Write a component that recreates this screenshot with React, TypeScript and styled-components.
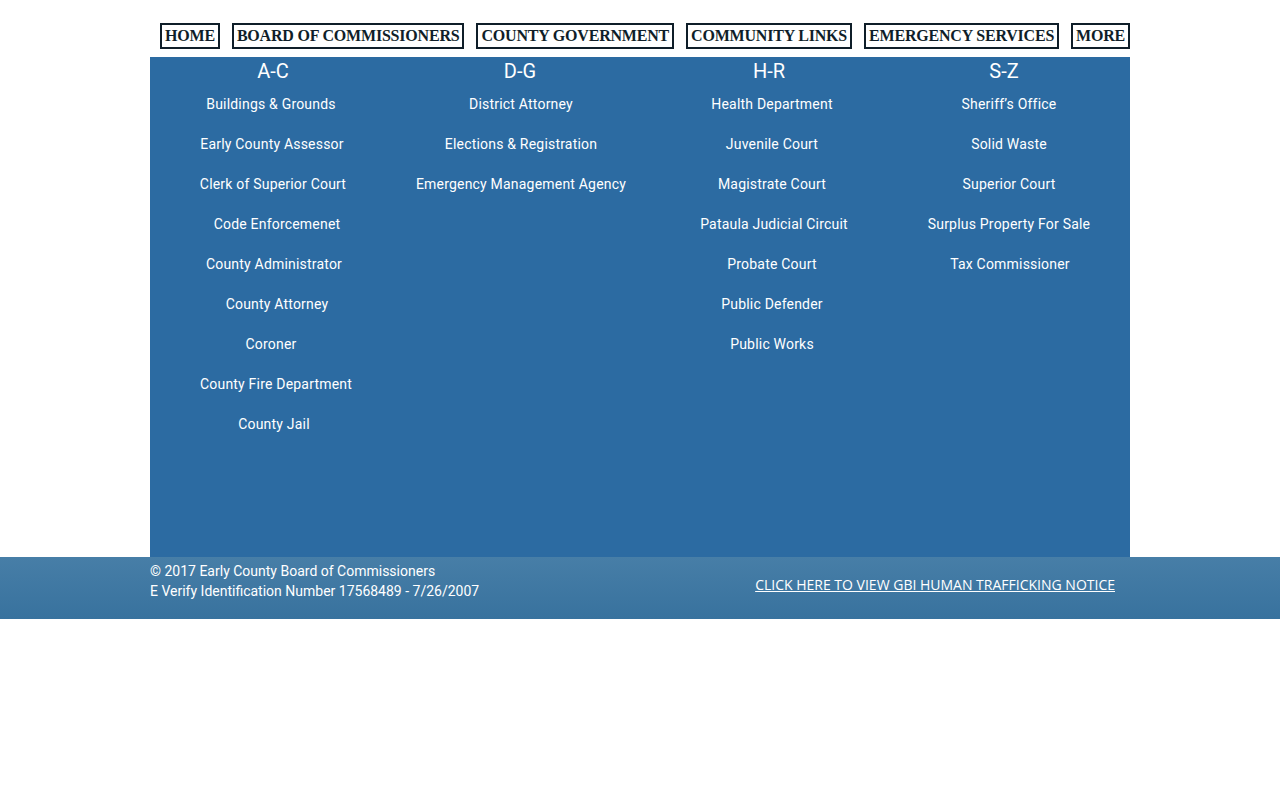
import React from 'react'
import styled, { createGlobalStyle } from 'styled-components'

const GlobalStyle = createGlobalStyle`
  body {
    margin: 0;
    background: #ffffff;
    font-family: Roboto, "Liberation Sans", sans-serif;
  }
`

const Page = styled.div`
  width: 100%;
`

const Nav = styled.nav`
  width: 980px;
  margin: 0 auto;
  padding: 23px 0 0 10px;
  box-sizing: border-box;
  display: flex;
  gap: 12px;
`

const NavItem = styled.a`
  display: block;
  border: 2px solid #0f1e29;
  padding: 0 3px;
  font-family: "Liberation Serif", serif;
  font-weight: bold;
  font-size: 16px;
  line-height: 22px;
  letter-spacing: -0.2px;
  color: #0f1e29;
  text-decoration: none;
  white-space: nowrap;
`

const Panel = styled.section`
  width: 980px;
  height: 500px;
  margin: 8px auto 0;
  background: #2c6ba2;
  display: grid;
  grid-template-columns: 246px 248px 250px 220px;
  align-items: start;
`

const Column = styled.div`
  display: flex;
  flex-direction: column;
  align-items: center;
`

const Heading = styled.h2`
  margin: 2px 0 0;
  font-size: 20px;
  font-weight: normal;
  line-height: 24px;
  color: #ffffff;
`

const List = styled.ul`
  list-style: none;
  margin: 11px 0 0;
  padding: 0;
  display: flex;
  flex-direction: column;
  align-items: center;
  gap: 20px;
`

const Item = styled.li<{ $shift?: number }>`
  font-size: 14px;
  line-height: 20px;
  letter-spacing: 0.2px;
  color: #ffffff;
  white-space: nowrap;
  padding-left: ${(p) => ((p.$shift ?? 0) > 0 ? (p.$shift ?? 0) * 2 : 0)}px;
  padding-right: ${(p) => ((p.$shift ?? 0) < 0 ? -(p.$shift ?? 0) * 2 : 0)}px;
`

const Footer = styled.footer`
  height: 62px;
  background: linear-gradient(#477ea7, #38729e);
`

const FooterInner = styled.div`
  width: 980px;
  margin: 0 auto;
  padding: 4px 15px 0 0;
  box-sizing: border-box;
  display: flex;
  justify-content: space-between;
`

const Copy = styled.p`
  margin: 0;
  font-size: 14px;
  line-height: 20px;
  color: #ffffff;
`

const Notice = styled.a`
  margin-top: 14px;
  font-family: "Open Sans", sans-serif;
  font-size: 14px;
  line-height: 20px;
  color: #ffffff;
  text-decoration: underline;
  white-space: nowrap;
`

const navLinks = [
  'HOME',
  'BOARD OF COMMISSIONERS',
  'COUNTY GOVERNMENT',
  'COMMUNITY LINKS',
  'EMERGENCY SERVICES',
  'MORE',
]

interface IGroup {
  title: string
  items: [string, number][]
}

const groups: IGroup[] = [
  {
    title: 'A-C',
    items: [
      ['Buildings & Grounds', -2],
      ['Early County Assessor', -1],
      ['Clerk of Superior Court', 0],
      ['Code Enforcemenet', 4],
      ['County Administrator', 1],
      ['County Attorney', 4],
      ['Coroner', -2],
      ['County Fire Department', 3],
      ['County Jail', 1],
    ],
  },
  {
    title: 'D-G',
    items: [
      ['District Attorney', 1],
      ['Elections & Registration', 1],
      ['Emergency Management Agency', 1],
    ],
  },
  {
    title: 'H-R',
    items: [
      ['Health Department', 3],
      ['Juvenile Court', 3],
      ['Magistrate Court', 3],
      ['Pataula Judicial Circuit', 5],
      ['Probate Court', 3],
      ['Public Defender', 3],
      ['Public Works', 3],
    ],
  },
  {
    title: 'S-Z',
    items: [
      ['Sheriff’s Office', 5],
      ['Solid Waste', 5],
      ['Superior Court', 5],
      ['Surplus Property For Sale', 5],
      ['Tax Commissioner', 6],
    ],
  },
]

function App() {
  return (
    <Page>
      <GlobalStyle />
      <Nav>
        {navLinks.map((link) => (
          <NavItem key={link} href="#">
            {link}
          </NavItem>
        ))}
      </Nav>
      <Panel>
        {groups.map((group) => (
          <Column key={group.title}>
            <Heading>{group.title}</Heading>
            <List>
              {group.items.map(([name, shift]) => (
                <Item key={name} $shift={shift}>
                  {name}
                </Item>
              ))}
            </List>
          </Column>
        ))}
      </Panel>
      <Footer>
        <FooterInner>
          <Copy>
            © 2017 Early County Board of Commissioners
            <br />
            E Verify Identification Number 17568489 - 7/26/2007
          </Copy>
          <Notice href="#">CLICK HERE TO VIEW GBI HUMAN TRAFFICKING NOTICE</Notice>
        </FooterInner>
      </Footer>
    </Page>
  )
}

export default App
